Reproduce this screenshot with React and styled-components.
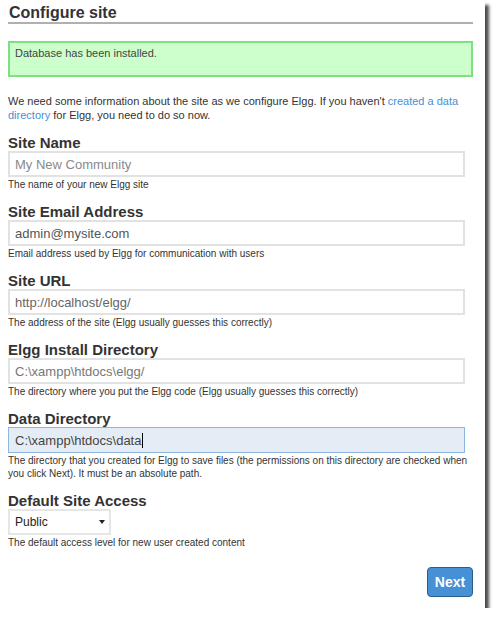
import styled, { createGlobalStyle } from "styled-components";

const GlobalStyle = createGlobalStyle`
  html, body {
    margin: 0;
    padding: 0;
    background: #ffffff;
  }
  body {
    font-family: "Liberation Sans", Arial, sans-serif;
    color: #333333;
  }
`;

const fields = [
  { label: "Site Name", value: "My New Community", help: "The name of your new Elgg site", tone: "#8a8a8a" },
  { label: "Site Email Address", value: "admin@mysite.com", help: "Email address used by Elgg for communication with users", tone: "#555555" },
  { label: "Site URL", value: "http://localhost/elgg/", help: "The address of the site (Elgg usually guesses this correctly)", tone: "#666666" },
  { label: "Elgg Install Directory", value: "C:\\xampp\\htdocs\\elgg/", help: "The directory where you put the Elgg code (Elgg usually guesses this correctly)", tone: "#777777" },
  {
    label: "Data Directory",
    value: "C:\\xampp\\htdocs\\data",
    help: "The directory that you created for Elgg to save files (the permissions on this directory are checked when you click Next). It must be an absolute path.",
    tone: "#444444",
    focused: true,
  },
];

export default function App() {
  return (
    <>
      <GlobalStyle />
      <Card>
        <Title>Configure site</Title>

        <Notice>Database has been installed.</Notice>

        <Intro>
          We need some information about the site as we configure Elgg. If you haven't{" "}
          <a href="#">created a data</a> <a href="#">directory</a> for Elgg, you need to do so now.
        </Intro>

        {fields.map((f) => (
          <Field key={f.label}>
            <Label>{f.label}</Label>
            <TextBox $focused={f.focused} $tone={f.tone} role="textbox">
              {f.value}
              {f.focused && <Caret />}
            </TextBox>
            <Help>{f.help}</Help>
          </Field>
        ))}

        <Field>
          <Label>Default Site Access</Label>
          <Select role="combobox">
            Public
            <Arrow />
          </Select>
          <Help>The default access level for new user created content</Help>
        </Field>

        <Footer>
          <NextButton>Next</NextButton>
        </Footer>
      </Card>
    </>
  );
}

const Card = styled.div`
  width: 485px;
  height: 608px;
  box-sizing: border-box;
  padding: 3px 12px 11px 8px;
  background: #ffffff;
  box-shadow: 4px 5px 3px rgba(0, 0, 0, 0.7);
  display: flex;
  flex-direction: column;
`;

const Title = styled.h1`
  margin: 0;
  font-size: 16px;
  line-height: 19px;
  font-weight: 700;
  color: #333333;
  padding-left: 1px;
  border-bottom: 2px solid #b0b0b0;
`;

const Notice = styled.div`
  margin-top: 17px;
  height: 36px;
  box-sizing: border-box;
  padding: 3px 5px;
  background: #ccffcc;
  border: 2px solid #7fe07f;
  font-size: 11px;
  line-height: 14px;
  color: #444444;
`;

const Intro = styled.p`
  margin: 17px 0 0 0;
  font-size: 11px;
  line-height: 14px;
  color: #333333;

  a {
    color: #4690d6;
    text-decoration: none;
  }
`;

const Field = styled.div`
  margin-top: 13px;
  display: flex;
  flex-direction: column;
  align-items: flex-start;
`;

const Label = styled.label`
  font-size: 15px;
  line-height: 16px;
  font-weight: 700;
  color: #333333;
`;

const TextBox = styled.div`
  width: 457px;
  height: 26px;
  box-sizing: border-box;
  display: flex;
  align-items: center;
  font-size: 13px;
  color: ${(p) => p.$tone};
  background: ${(p) => (p.$focused ? "#e4ecf5" : "#ffffff")};
  border: ${(p) => (p.$focused ? "1px solid #8fb6e0" : "2px solid #e2e2e2")};
  padding: 0 5px 0 ${(p) => (p.$focused ? "6px" : "5px")};
`;

const Caret = styled.span`
  display: inline-block;
  width: 1px;
  height: 15px;
  background: #000000;
  margin-left: 1px;
`;

const Help = styled.div`
  margin-top: 1px;
  font-size: 10px;
  line-height: 13px;
  color: #333333;
`;

const Select = styled.div`
  width: 103px;
  height: 26px;
  box-sizing: border-box;
  padding: 0 4px 0 5px;
  display: flex;
  align-items: center;
  justify-content: space-between;
  font-size: 12px;
  color: #222222;
  background: #ffffff;
  border: 2px solid #e6e6e6;
`;

const Arrow = styled.span`
  width: 0;
  height: 0;
  border-left: 3px solid transparent;
  border-right: 3px solid transparent;
  border-top: 4px solid #222222;
`;

const Footer = styled.div`
  margin-top: auto;
  display: flex;
  justify-content: flex-end;
`;

const NextButton = styled.button`
  width: 46px;
  height: 30px;
  padding: 0;
  background: #4690d6;
  border: 1px solid #2f5d8a;
  border-radius: 4px;
  color: #ffffff;
  font-family: "Liberation Sans", Arial, sans-serif;
  font-size: 14px;
  font-weight: 700;
`;
